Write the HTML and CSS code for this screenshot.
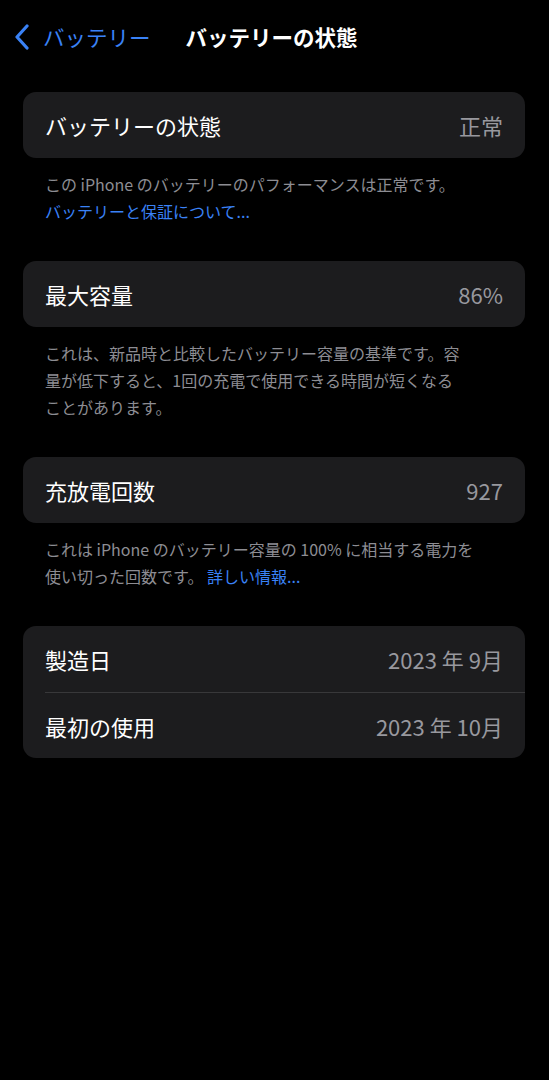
FILE: index.html
```html
<!DOCTYPE html>
<html lang="ja">

<head>
    <meta charset="UTF-8">
    <meta name="viewport" content="width=device-width, initial-scale=1.0">
    <title>バッテリーの状態</title>
    <link rel="stylesheet" href="styles.css">
</head>

<body>
    <!-- ナビゲーションバー -->
    <header class="nav">
        <a class="back" href="#">
            <svg class="chevron" viewBox="0 0 18 26" width="18" height="26">
                <path d="M14 2 L4 13 L14 24" fill="none" stroke="currentColor" stroke-width="3.2" stroke-linecap="round" stroke-linejoin="round" />
            </svg>
            <span>バッテリー</span>
        </a>
        <h1 class="title">バッテリーの状態</h1>
    </header>

    <main class="content">
        <section class="group">
            <div class="card">
                <div class="row">
                    <span class="label">バッテリーの状態</span>
                    <span class="value">正常</span>
                </div>
            </div>
            <p class="note">この iPhone のバッテリーのパフォーマンスは正常です。<br><a href="#">バッテリーと保証について...</a></p>
        </section>

        <section class="group">
            <div class="card">
                <div class="row">
                    <span class="label">最大容量</span>
                    <span class="value">86%</span>
                </div>
            </div>
            <p class="note">これは、新品時と比較したバッテリー容量の基準です。容<br>量が低下すると、1回の充電で使用できる時間が短くなる<br>ことがあります。</p>
        </section>

        <section class="group">
            <div class="card">
                <div class="row">
                    <span class="label">充放電回数</span>
                    <span class="value">927</span>
                </div>
            </div>
            <p class="note">これは iPhone のバッテリー容量の 100% に相当する電力を<br>使い切った回数です。 <a href="#">詳しい情報...</a></p>
        </section>

        <section class="group">
            <div class="card">
                <div class="row">
                    <span class="label">製造日</span>
                    <span class="value">2023 年 9月</span>
                </div>
                <div class="row">
                    <span class="label">最初の使用</span>
                    <span class="value">2023 年 10月</span>
                </div>
            </div>
        </section>
    </main>
</body>

</html>
```

FILE: styles.css
```css
* {
    box-sizing: border-box;
}

body {
    margin: 0;
    background: #000;
    color: #fff;
    font-family: "Noto Sans CJK JP", "Noto Sans", sans-serif;
    min-height: 1080px;
}

a {
    color: #3a82f6;
    text-decoration: none;
}

/* ナビゲーションバー */
.nav {
    display: flex;
    align-items: center;
    height: 74px;
    padding: 0 0 0 13px;
}

.nav .back {
    display: flex;
    align-items: center;
    gap: 12px;
    font-size: 21.5px;
    line-height: 1;
}

.nav .chevron {
    display: block;
}

.nav .title {
    margin: 0 0 0 35px;
    font-size: 21.5px;
    font-weight: 700;
    line-height: 1;
}

.content {
    padding: 18px 24px 0 23px;
}

.group {
    margin-bottom: 36px;
}

/* 角丸のリスト */
.card {
    background: #1c1c1e;
    border-radius: 13px;
    overflow: hidden;
}

.card .row {
    display: flex;
    justify-content: space-between;
    align-items: center;
    height: 66px;
    padding: 0 22px;
    font-size: 22px;
}

/* 2行目以降は上に区切り線 */
.card .row + .row {
    border-top: 1px solid #38383a;
    margin-left: 22px;
    padding-left: 0;
}

.card .label {
    color: #fff;
}

.card .value {
    color: #98989e;
}

.note {
    margin: 0;
    padding: 13px 22px 0;
    color: #8d8d93;
    font-size: 16px;
    line-height: 27px;
}
```
